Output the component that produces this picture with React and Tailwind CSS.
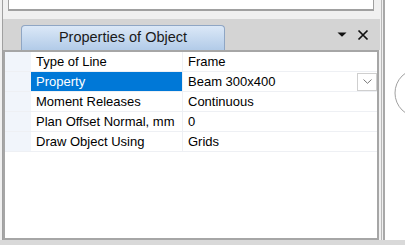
import React from 'react';

const rows = [
  { name: 'Type of Line', value: 'Frame' },
  { name: 'Property', value: 'Beam 300x400', selected: true },
  { name: 'Moment Releases', value: 'Continuous' },
  { name: 'Plan Offset Normal, mm', value: '0' },
  { name: 'Draw Object Using', value: 'Grids' },
];

export default function App() {
  return (
    <div className="w-[405px] h-[245px] bg-white flex flex-col overflow-hidden text-black" style={{ fontFamily: '"Liberation Sans", Arial, sans-serif' }}>
      <div className="flex h-[240px]">
        {/* Docked panel */}
        <div className="w-[385px] h-full bg-[#f0f0f0] pl-[2px] flex">
          <div className="flex-1 h-full border-l border-[#a0a0a0] flex flex-col">
            {/* Top (previous) panel box */}
            <div className="ml-[5px] w-[366px] h-[11px] bg-white border-x border-b-2 border-[#a0a0a0]" />
            <div className="h-[8px]" />

            {/* Tab strip */}
            <div className="h-[31px] w-[377px] bg-[#d4d4d4] flex items-end">
              <div className="ml-[18px] w-[204px] h-[25px] rounded-t-[4px] border border-b-0 border-[#8fa6c4] bg-gradient-to-b from-[#dbe8f7] to-[#b2cbe8] flex items-center justify-center text-[14.5px] text-[#1a1a1a]">
                Properties of Object
              </div>
              <div className="flex-1 h-full flex items-center justify-end pr-[11px] gap-[10px]">
                <svg width="10" height="5" viewBox="0 0 10 5">
                  <path d="M0.5 0.5 L9.5 0.5 L5 4.8 Z" fill="#111" />
                </svg>
                <svg width="12" height="12" viewBox="0 0 12 12">
                  <path d="M1.5 1.5 L10.5 10.5 M10.5 1.5 L1.5 10.5" stroke="#111" strokeWidth="1.7" />
                </svg>
              </div>
            </div>

            {/* Property grid */}
            <div className="w-[376px] h-[190px] bg-white border-2 border-[#a6a6a6] text-[13px]">
              {rows.map((r) => (
                <div key={r.name} className="flex h-[20px] border-b border-[#eef0f4]">
                  <div className="w-[26px] bg-[#f1f5fb]" />
                  <div className={`w-[152px] pl-[5px] flex items-center border-r border-[#eef0f4] ${r.selected ? 'bg-[#0078d7] text-white' : ''}`}>
                    {r.name}
                  </div>
                  <div className="flex-1 pl-[5px] flex items-center justify-between">
                    <span>{r.value}</span>
                    {r.selected && (
                      <div className="w-[20px] h-[18px] border border-[#cfcfcf] bg-white flex items-center justify-center">
                        <svg width="9" height="5" viewBox="0 0 9 5">
                          <path d="M0.5 0.5 L4.5 4.3 L8.5 0.5" stroke="#777" strokeWidth="1" fill="none" />
                        </svg>
                      </div>
                    )}
                  </div>
                </div>
              ))}
            </div>
          </div>
          <div className="w-[1px] h-full" />
          <div className="w-[1px] h-full bg-[#b8b8b8]" />
          <div className="w-[1px] h-full" />
          <div className="w-[2px] h-full bg-[#a8a8a8]" />
        </div>

        {/* Right canvas edge */}
        <div className="w-[20px] h-full bg-white">
          <svg width="20" height="240" viewBox="0 0 20 240">
            <circle cx="34" cy="93" r="24" fill="none" stroke="#a0a0a0" strokeWidth="1" />
          </svg>
        </div>
      </div>
      <div className="h-[5px] bg-[#d9d9d9]" />
    </div>
  );
}
